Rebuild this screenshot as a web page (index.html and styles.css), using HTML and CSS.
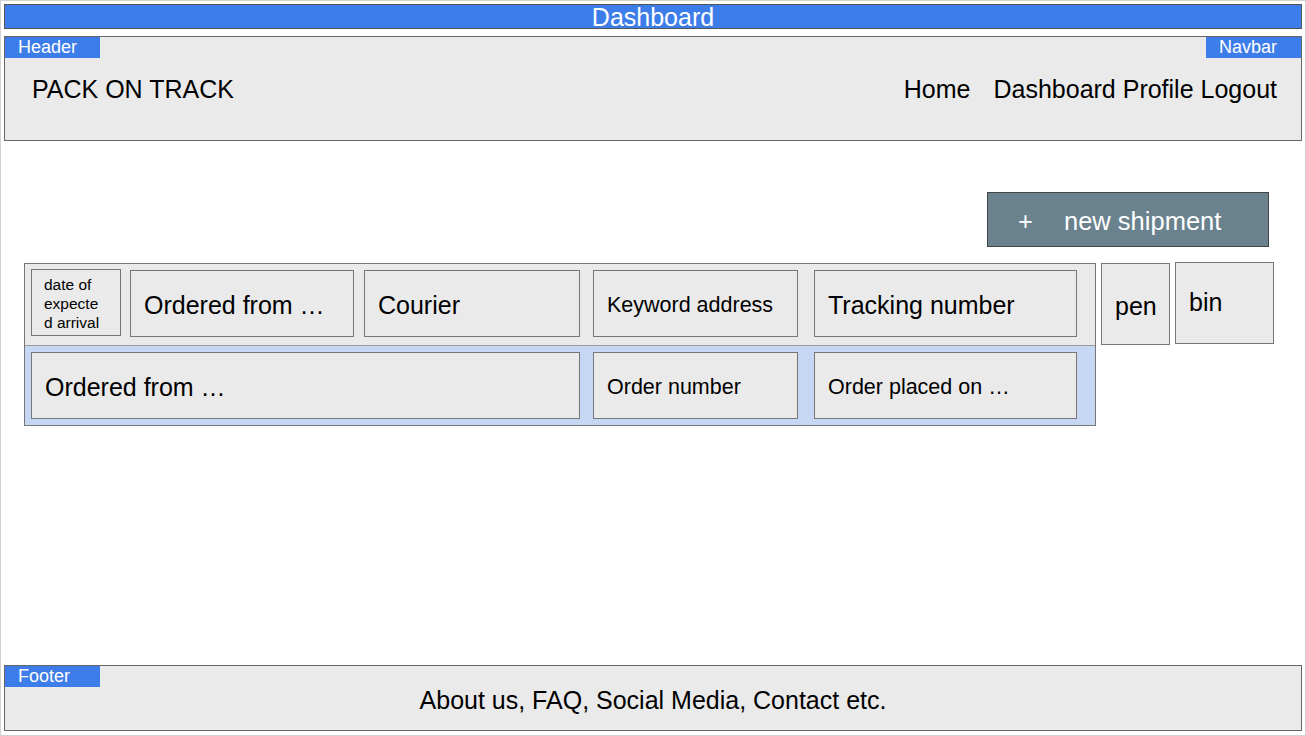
FILE: index.html
```html
<!DOCTYPE html>
<html lang="en">
<head>
<meta charset="utf-8">
<title>Dashboard</title>
<link rel="stylesheet" href="styles.css">
</head>
<body>
<div class="page">
  <div class="titlebar">Dashboard</div>

  <header class="header">
    <span class="tag tag-left">Header</span>
    <span class="tag tag-right">Navbar</span>
    <div class="logo">PACK ON TRACK</div>
    <nav class="nav">
      <span class="nav-home">Home</span>
      <span>Dashboard Profile Logout</span>
    </nav>
  </header>

  <main class="main">
    <div class="actions">
      <button class="new-btn"><span class="plus">+</span><span>new shipment</span></button>
    </div>

    <div class="shipment">
      <div class="table">
        <div class="row row-top">
          <div class="cell c-date"><span class="date-text">date of expected arrival</span></div>
          <div class="cell c-from">Ordered from …</div>
          <div class="cell c-courier">Courier</div>
          <div class="cell c-key small">Keyword address</div>
          <div class="cell c-track">Tracking number</div>
        </div>
        <div class="row row-bottom">
          <div class="cell c-from-wide">Ordered from …</div>
          <div class="cell c-key small">Order number</div>
          <div class="cell c-track small">Order placed on …</div>
        </div>
      </div>
      <div class="side pen">pen</div>
      <div class="side bin">bin</div>
    </div>
  </main>

  <footer class="footer">
    <span class="tag tag-left">Footer</span>
    <div class="footer-text">About us, FAQ, Social Media, Contact etc.</div>
  </footer>
</div>
</body>
</html>
```

FILE: styles.css
```css
* { box-sizing: border-box; }

html, body {
  margin: 0;
  padding: 0;
  background: #ffffff;
}

body {
  font-family: "Liberation Sans", Arial, sans-serif;
  color: #000;
}

.page {
  width: 1306px;
  height: 736px;
  border: 1px solid #d2d2d2;
  padding: 3px 3px 4px 3px;
  display: flex;
  flex-direction: column;
}

.titlebar {
  height: 25px;
  background: #3d7de9;
  border: 1px solid #555;
  color: #fff;
  font-size: 25px;
  line-height: 24px;
  text-align: center;
}

.header {
  position: relative;
  margin-top: 7px;
  height: 105px;
  background: #eaeaea;
  border: 1px solid #666;
  display: flex;
  align-items: center;
  justify-content: space-between;
  padding: 1px 24px 0 27px;
  font-size: 25px;
}

.tag {
  position: absolute;
  top: 0;
  width: 95px;
  height: 21px;
  background: #3d7de9;
  color: #fff;
  font-size: 18px;
  line-height: 21px;
  padding-left: 13px;
}
.tag-left { left: 0; }
.tag-right { right: 0; padding-left: 13px; }

.nav { display: flex; gap: 23px; }

.main {
  flex: 1;
  display: flex;
  flex-direction: column;
}

.actions {
  display: flex;
  justify-content: flex-end;
  padding: 51px 33px 0 0;
}

.new-btn {
  width: 282px;
  height: 55px;
  background: #6a828e;
  border: 1px solid #444;
  color: #fff;
  font-family: "Liberation Sans", Arial, sans-serif;
  font-size: 25.5px;
  display: flex;
  align-items: center;
  padding: 3px 0 0 30px;
}
.plus { width: 14px; margin-right: 32px; }

.shipment {
  display: flex;
  align-items: flex-start;
  margin: 16px 0 0 20px;
}

.table {
  width: 1072px;
  border: 1px solid #777;
}

.row {
  display: flex;
  padding-left: 6px;
}
.row-top {
  height: 81px;
  background: #eaeaea;
  padding-top: 5px;
}
.row-bottom {
  height: 80px;
  background: #c5d7f3;
  border-top: 1px solid #9a9a9a;
  padding-top: 6px;
}

.cell {
  height: 67px;
  background: #eaeaea;
  border: 1px solid #777;
  display: flex;
  align-items: center;
  padding: 3px 0 0 13px;
  font-size: 25px;
  white-space: nowrap;
}
.cell.small { font-size: 21.5px; }

.c-date { width: 90px; height: 67px; padding: 0 0 0 12px; }
.date-text {
  width: 58px;
  font-size: 15.5px;
  line-height: 19px;
  white-space: normal;
  word-break: break-all;
  margin-top: 1px;
}
.c-from { width: 224px; margin-left: 9px; margin-top: 1px; }
.c-courier { width: 216px; margin-left: 10px; margin-top: 1px; }
.c-key { width: 205px; margin-left: 13px; margin-top: 1px; }
.c-track { width: 263px; margin-left: 16px; margin-top: 1px; }
.row-bottom .c-key, .row-bottom .c-track { margin-top: 0; }
.c-from-wide { width: 549px; }

.side {
  background: #eaeaea;
  border: 1px solid #777;
  font-size: 25px;
  padding-left: 13px;
  display: flex;
  align-items: center;
}
.pen { width: 69px; height: 82px; margin-left: 5px; padding-top: 4px; }
.bin { width: 99px; height: 82px; margin-left: 5px; margin-top: -1px; padding-bottom: 2px; }

.footer {
  position: relative;
  height: 66px;
  background: #eaeaea;
  border: 1px solid #666;
  display: flex;
  align-items: center;
  justify-content: center;
  padding-top: 5px;
  font-size: 25px;
}
```
